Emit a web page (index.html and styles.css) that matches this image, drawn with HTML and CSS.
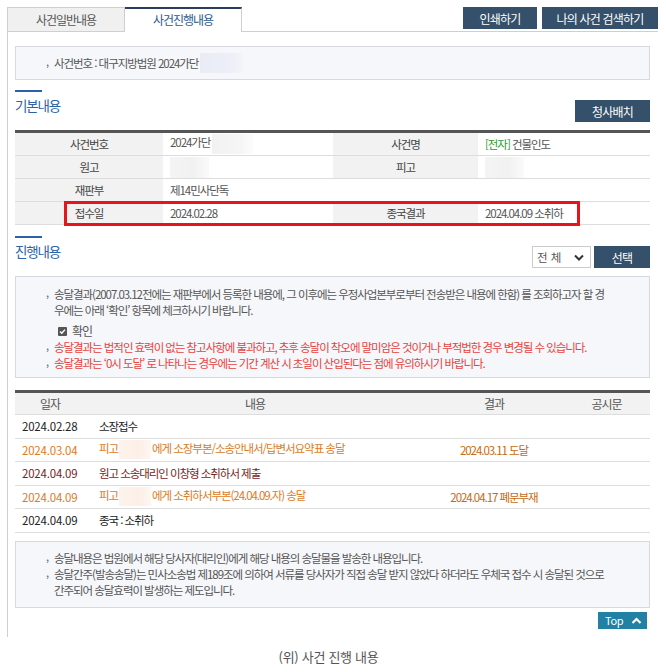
FILE: index.html
```html
<!DOCTYPE html>
<html lang="ko">
<head>
  <meta charset="UTF-8">
  <title>사건진행내용</title>
  <link rel="stylesheet" href="styles.css">
</head>
<body>

<div class="page">
  <div class="tabbar">
    <ul class="tabs">
      <li class="tab">사건일반내용</li>
      <li class="tab on">사건진행내용</li>
    </ul>
    <div class="tab-btns">
      <button class="btn btn-print">인쇄하기</button>
      <button class="btn btn-search">나의 사건 검색하기</button>
    </div>
  </div>

  <div class="content">
    <div class="case-box">
      <span class="bul">사건번호 : 대구지방법원 2024가단</span><span class="blur b-case"></span>
    </div>

    <!-- 기본내용 -->
    <div class="sec-head">
      <h2 class="sec-title">기본내용</h2>
      <button class="btn btn-map">청사배치</button>
    </div>
    <div class="info-wrap">
      <table class="info">
        <colgroup>
          <col style="width:148px"><col style="width:170px"><col style="width:145px"><col>
        </colgroup>
        <tr>
          <th>사건번호</th>
          <td>2024가단<span class="blur b-no"></span></td>
          <th>사건명</th>
          <td><span class="green">[전자]</span> 건물인도</td>
        </tr>
        <tr>
          <th>원고</th>
          <td><span class="blur b-party"></span></td>
          <th>피고</th>
          <td><span class="blur b-party"></span></td>
        </tr>
        <tr>
          <th>재판부</th>
          <td colspan="3">제14민사단독</td>
        </tr>
        <tr>
          <th>접수일</th>
          <td>2024.02.28</td>
          <th>종국결과</th>
          <td>2024.04.09 소취하</td>
        </tr>
      </table>
      <div class="mark"></div>
    </div>

    <!-- 진행내용 -->
    <div class="sec-head sec-prog">
      <h2 class="sec-title">진행내용</h2>
      <div class="filter">
        <span class="select">전 체
          <svg width="10" height="7" viewBox="0 0 10 7"><path d="M1 1.5 5 5.5 9 1.5" fill="none" stroke="#333" stroke-width="2"/></svg>
        </span>
        <button class="btn btn-pick">선택</button>
      </div>
    </div>

    <div class="note-box">
      <ul class="notes">
        <li>송달결과(2007.03.12전에는 재판부에서 등록한 내용에, 그 이후에는 우정사업본부로부터 전송받은 내용에 한함) 를 조회하고자 할 경<br>우에는 아래 ‘확인’ 항목에 체크하시기 바랍니다.</li>
      </ul>
      <div class="check">
        <span class="chk"><svg width="9" height="9" viewBox="0 0 9 9"><rect width="9" height="9" rx="1" fill="#555"/><path d="M2 4.6 3.8 6.3 7 2.6" fill="none" stroke="#fff" stroke-width="1.4"/></svg></span>
        확인
      </div>
      <ul class="notes red">
        <li>송달결과는 법적인 효력이 없는 참고사항에 불과하고, 추후 송달이 착오에 말미암은 것이거나 부적법한 경우 변경될 수 있습니다.</li>
        <li>송달결과는 ‘0시 도달’ 로 나타나는 경우에는 기간 계산 시 초일이 산입된다는 점에 유의하시기 바랍니다.</li>
      </ul>
    </div>

    <table class="prog">
      <colgroup>
        <col style="width:70px"><col style="width:340px"><col style="width:138px"><col>
      </colgroup>
      <tr>
        <th>일자</th><th>내용</th><th>결과</th><th>공시문</th>
      </tr>
      <tr>
        <td class="date">2024.02.28</td><td class="desc">소장접수</td><td class="res"></td><td></td>
      </tr>
      <tr class="orange">
        <td class="date">2024.03.04</td><td class="desc">피고<span class="blur b-row"></span>에게 소장부본/소송안내서/답변서요약표 송달</td><td class="res">2024.03.11 도달</td><td></td>
      </tr>
      <tr class="dark">
        <td class="date">2024.04.09</td><td class="desc">원고 소송대리인 이창형 소취하서 제출</td><td class="res"></td><td></td>
      </tr>
      <tr class="orange">
        <td class="date">2024.04.09</td><td class="desc">피고<span class="blur b-row"></span>에게 소취하서부본(24.04.09.자) 송달</td><td class="res">2024.04.17 폐문부재</td><td></td>
      </tr>
      <tr>
        <td class="date">2024.04.09</td><td class="desc">종국 : 소취하</td><td class="res"></td><td></td>
      </tr>
    </table>

    <div class="note-box foot">
      <ul class="notes">
        <li>송달내용은 법원에서 해당 당사자(대리인)에게 해당 내용의 송달물을 발송한 내용입니다.</li>
        <li>송달간주(발송송달)는 민사소송법 제189조에 의하여 서류를 당사자가 직접 송달 받지 않았다 하더라도 우체국 접수 시 송달된 것으로<br>간주되어 송달효력이 발생하는 제도입니다.</li>
      </ul>
    </div>

    <div class="top-row">
      <a class="top-btn" href="#">Top
        <svg width="11" height="7" viewBox="0 0 11 7"><path d="M1.5 6 5.5 2 9.5 6" fill="none" stroke="#fff" stroke-width="2.2"/></svg>
      </a>
    </div>
  </div>

  <p class="caption">(위) 사건 진행 내용</p>
</div>

</body>
</html>
```

FILE: styles.css
```css
body {
  margin: 0;
  padding: 0;
  font-family: "Noto Sans CJK KR", "Noto Sans", sans-serif;
  font-size: 11.5px;
  letter-spacing: -1.05px;
  color: #444;
  background-color: #fff;
}

.page {
  padding: 7px 8px 0 7px;
}

/* 탭 */
.tabbar {
  display: flex;
  justify-content: space-between;
  align-items: flex-start;
  border-bottom: 1px solid #cfcfcf;
}

.tabs {
  display: flex;
  margin: 0;
  padding: 0;
  list-style: none;
}

.tab {
  width: 116px;
  height: 23px;
  line-height: 23px;
  text-align: center;
  font-size: 12px;
  color: #555;
  background-color: #f0f0f0;
  border: 1px solid #cfcfcf;
  border-bottom: none;
}

.tab.on {
  height: 22px;
  line-height: 22px;
  color: #2c5a8e;
  background-color: #fff;
  border-top: 2px solid #2b3f5c;
  border-left: none;
  margin-bottom: -1px;
  padding-bottom: 1px;
}

.tab-btns {
  display: flex;
  gap: 5px;
}

.btn {
  font-family: inherit;
  font-size: 12px;
  letter-spacing: -0.8px;
  color: #fff;
  background-color: #34506a;
  border: none;
  height: 22px;
  padding: 0;
  cursor: pointer;
}

.btn-print { width: 74px; }
.btn-search { width: 116px; }
.btn-map { width: 75px; }
.btn-pick { width: 56px; }

/* 본문 */
.content {
  border-left: 1px solid #cfcfcf;
  padding: 14px 8px 8px 7px;
}

.case-box {
  height: 32px;
  display: flex;
  align-items: center;
  padding-left: 38px;
  background-color: #f6f7fb;
  border: 1px solid #d6d9e0;
  color: #555;
}

.bul {
  position: relative;
}

.bul::before,
.notes li::before {
  content: ",";
  position: absolute;
  left: -8px;
  top: -2px;
  font-size: 11px;
  color: #666;
}

.blur {
  display: inline-block;
  vertical-align: middle;
}

.b-case {
  width: 43px;
  height: 20px;
  margin-left: 2px;
  background: linear-gradient(90deg, #e9ecf5, #eceff7 70%, #f2f4f9);
}

.b-no {
  width: 42px;
  height: 20px;
  margin-left: 2px;
  background: linear-gradient(90deg, #f1f1f1, #f6f6f6 70%, #fdfdfd);
}

.b-party {
  width: 39px;
  height: 21px;
  background: linear-gradient(90deg, #f4f4f4, #f1f1f1 60%, #fafafa);
}

.b-row {
  width: 32px;
  height: 19px;
  margin: 0 1px;
  background: linear-gradient(90deg, #fdf3ec, #fcefe6 60%, #fef6f1);
}

.sec-head {
  display: flex;
  justify-content: space-between;
  align-items: flex-end;
  margin-top: 10px;
}

.sec-head.sec-prog {
  margin-top: 11px;
}

.sec-title {
  margin: 0;
  font-size: 13.5px;
  letter-spacing: -1.2px;
  font-weight: normal;
  color: #2b63a6;
  line-height: 18px;
  padding-bottom: 8px;
}

.sec-title::before {
  content: "";
  display: block;
  width: 27px;
  height: 2px;
  margin-bottom: 4px;
  background-color: #2b63a6;
}

/* 기본내용 표 */
.info-wrap {
  position: relative;
  margin-top: 8px;
}

.info,
.prog {
  width: 100%;
  border-collapse: collapse;
  table-layout: fixed;
  border-top: 3px solid #555;
}

.info th,
.info td {
  height: 22px;
  padding: 0;
  border-bottom: 1px solid #ddd;
  font-weight: normal;
}

.info th {
  background-color: #f2f2f2;
  color: #444;
  text-align: center;
}

.info td {
  padding-left: 7px;
  color: #555;
}

.green {
  color: #2d9a2d;
}

.mark {
  position: absolute;
  left: 49px;
  bottom: -1px;
  width: 516px;
  height: 25px;
  box-sizing: border-box;
  border: 3px solid #e8141c;
}

/* 진행내용 */
.filter {
  display: flex;
  gap: 3px;
}

.select {
  box-sizing: border-box;
  width: 59px;
  height: 22px;
  display: flex;
  align-items: center;
  justify-content: space-between;
  padding: 0 6px 0 4px;
  border: 1px solid #ccc;
  color: #555;
  letter-spacing: 0;
}

.note-box {
  margin-top: 8px;
  padding: 9px 10px 6px 38px;
  background-color: #f6f7fb;
  border: 1px solid #d6d9e0;
  color: #555;
  line-height: 16px;
}

.notes {
  margin: 0;
  padding: 0;
  list-style: none;
}

.notes li {
  position: relative;
}

.notes.red {
  color: #e8413b;
}

.check {
  display: flex;
  align-items: center;
  gap: 5px;
  margin: 5px 0 0 4px;
  font-size: 12px;
}

.chk svg {
  display: block;
}

.prog {
  margin-top: 12px;
}

.prog th {
  height: 21px;
  padding: 0;
  background-color: #f2f2f2;
  color: #555;
  font-weight: normal;
  font-size: 12px;
  border-bottom: 1px solid #ddd;
}

.prog td {
  height: 22.5px;
  padding: 0;
  border-bottom: 1px solid #ddd;
  color: #222;
}

.prog td.date {
  padding-left: 7px;
  letter-spacing: -0.2px;
}

.prog td.desc {
  padding-left: 14px;
}

.prog td.res {
  text-align: center;
}

.prog tr.orange td {
  color: #de7a1c;
}

.prog tr.orange td.res {
  color: #c8690e;
}

.prog tr.dark td {
  color: #7a1d1d;
}

.note-box.foot {
  margin-top: 8px;
  padding: 8px 10px 9px 38px;
}

.top-row {
  display: flex;
  justify-content: flex-end;
  margin-top: 4px;
  padding-right: 3px;
}

.top-btn {
  display: flex;
  align-items: center;
  justify-content: space-between;
  box-sizing: border-box;
  width: 49px;
  height: 17px;
  padding: 0 5px 0 7px;
  background-color: #2180a3;
  color: #fff;
  font-size: 11px;
  text-decoration: none;
  letter-spacing: -0.3px;
}

.caption {
  margin: 10px 0 0;
  text-align: center;
  font-size: 13px;
  color: #555;
  letter-spacing: -0.3px;
  padding-right: 8px;
}
```
